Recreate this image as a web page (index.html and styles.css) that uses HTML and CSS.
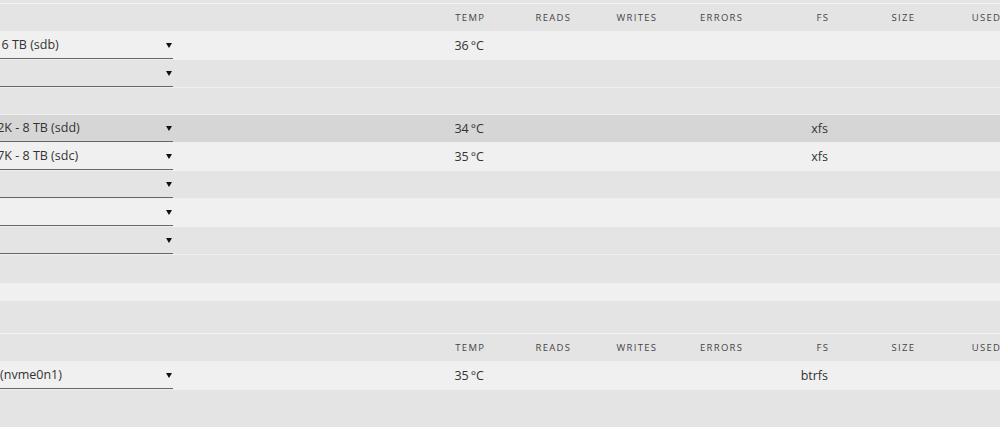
FILE: index.html
```html
<!DOCTYPE html>
<html>
<head>
    <title>Main</title>
    <link rel="stylesheet" href="styles.css">
</head>
<body>
    <div id="main">
        <!-- array devices -->
        <div class="disk-table">
            <div class="row head">
                <div></div>
                <div class="num">Temp</div>
                <div class="num">Reads</div>
                <div class="num">Writes</div>
                <div class="num">Errors</div>
                <div class="num">FS</div>
                <div class="num">Size</div>
                <div class="num">Used</div>
            </div>
            <div class="row light">
                <div><div class="device-select">WDC_WUH721816ALE6L4_3WH2JAKP - 16 TB (sdb)</div></div>
                <div class="num">36&#8201;°C</div>
                <div class="num"></div>
                <div class="num"></div>
                <div class="num"></div>
                <div class="num"></div>
                <div class="num"></div>
                <div class="num"></div>
            </div>
            <div class="row">
                <div><div class="device-select"></div></div>
            </div>
            <div class="row spacer"></div>
            <div class="row selected">
                <div><div class="device-select">WDC_WD80EFZZ-68BTXN0_WD-CA0KZR2K - 8 TB (sdd)</div></div>
                <div class="num">34&#8201;°C</div>
                <div class="num"></div>
                <div class="num"></div>
                <div class="num"></div>
                <div class="num">xfs</div>
            </div>
            <div class="row light">
                <div><div class="device-select">WDC_WD80EFZZ-68BTXN0_WD-CA0KZR7K - 8 TB (sdc)</div></div>
                <div class="num">35&#8201;°C</div>
                <div class="num"></div>
                <div class="num"></div>
                <div class="num"></div>
                <div class="num">xfs</div>
            </div>
            <div class="row">
                <div><div class="device-select"></div></div>
            </div>
            <div class="row light">
                <div><div class="device-select"></div></div>
            </div>
            <div class="row">
                <div><div class="device-select"></div></div>
            </div>
        </div>

        <div class="array-footer"></div>
        <div class="section-title"></div>
        <div class="section-gap"></div>

        <!-- pool devices -->
        <div class="disk-table">
            <div class="row head">
                <div></div>
                <div class="num">Temp</div>
                <div class="num">Reads</div>
                <div class="num">Writes</div>
                <div class="num">Errors</div>
                <div class="num">FS</div>
                <div class="num">Size</div>
                <div class="num">Used</div>
            </div>
            <div class="row light">
                <div><div class="device-select">CT1000P3PSSD8_2311D6ADB2C4 - 1 TB (nvme0n1)</div></div>
                <div class="num">35&#8201;°C</div>
                <div class="num"></div>
                <div class="num"></div>
                <div class="num"></div>
                <div class="num">btrfs</div>
            </div>
        </div>
    </div>
</body>
</html>
```

FILE: styles.css
```css
body {
    margin: 0;
    background: #e4e4e4;
    font-family: "Open Sans", "Liberation Sans", sans-serif;
    font-size: 12.5px;
    color: #333;
    overflow: hidden;
}
#main {
    margin-left: -236px;
    padding-top: 3px;
}
.disk-table {
    border-top: 1px solid #f2f2f2;
}
.row {
    display: grid;
    grid-template-columns: 634px repeat(7, 86px);
    height: 28px;
    box-sizing: border-box;
    border-bottom: 1px solid #efefef;
    line-height: 27px;
    white-space: nowrap;
}
.row > div {
    overflow: hidden;
}
.row.light {
    background: #f0f0f0;
}
.row.selected {
    background: #d6d6d6;
}
.row.spacer {
    height: 27px;
}
.num {
    text-align: right;
}
.head {
    font-size: 9.5px;
    letter-spacing: 1.3px;
    text-transform: uppercase;
    color: #444;
}
.head .num {
    margin-right: -1.3px;
}
.device-select {
    position: relative;
    width: 409px;
    height: 27px;
    box-sizing: border-box;
    padding-left: 4px;
    border-bottom: 1px solid #666;
    line-height: 26px;
}
.device-select::after {
    content: "";
    position: absolute;
    right: 1px;
    top: 11px;
    border-left: 3px solid transparent;
    border-right: 3px solid transparent;
    border-top: 5px solid #111;
}
.array-footer {
    height: 28px;
}
.section-title {
    height: 18px;
    background: #f0f0f0;
}
.section-gap {
    height: 32px;
}
```
